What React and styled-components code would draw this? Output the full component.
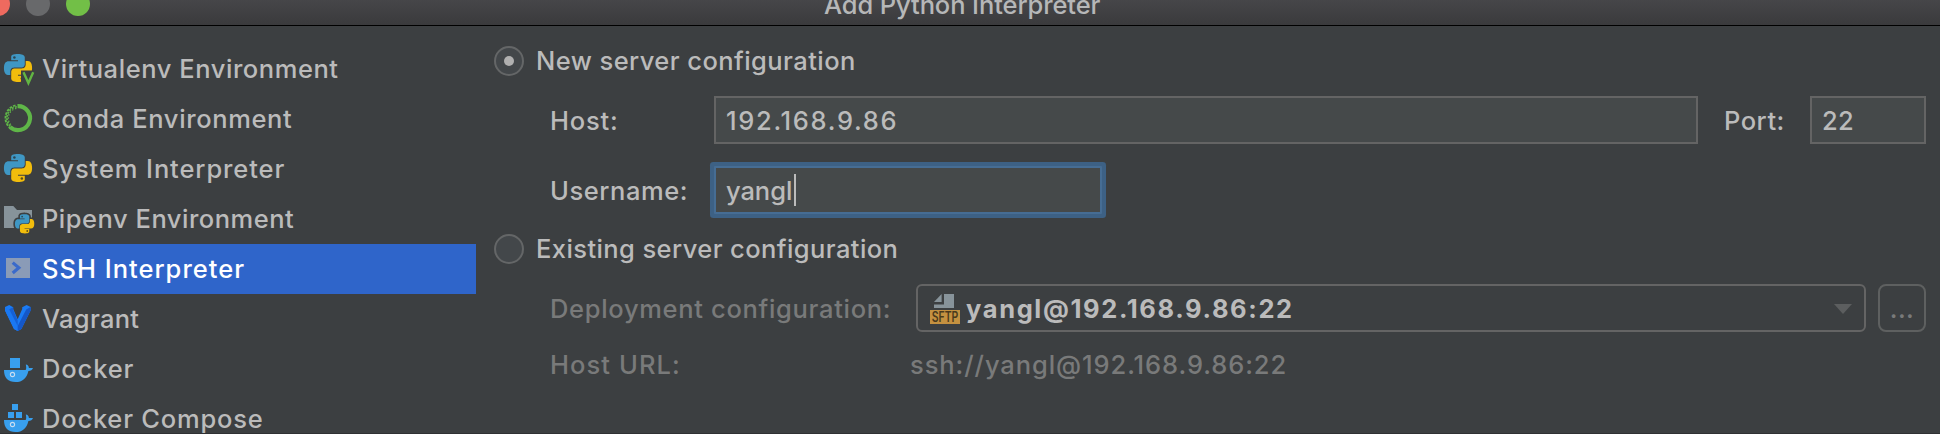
import React from "react";
import styled, { createGlobalStyle } from "styled-components";

const GlobalStyle = createGlobalStyle`
  * { box-sizing: border-box; }
  body { margin: 0; background: #3c3f41; }
`;

const Window = styled.div`
  width: 1940px;
  height: 434px;
  display: flex;
  flex-direction: column;
  overflow: hidden;
  background: #3c3f41;
  border-bottom: 1px solid #2f3133;
  color: #bbbbbb;
  font: 450 25.5px/50px Inter, "Liberation Sans", sans-serif;
  white-space: nowrap;
`;

const TitleBar = styled.header`
  flex: 0 0 26px;
  display: flex;
  align-items: flex-start;
  overflow: hidden;
  background: linear-gradient(#464649, #3a3a3c);
  border-bottom: 1px solid #000;
`;

const Lights = styled.div`
  flex: none;
  display: flex;
  gap: 16px;
  width: 838px;
  margin: -8px 0 0 -14px;
`;

const Light = styled.span`
  width: 24px;
  height: 24px;
  border-radius: 50%;
  background: ${(p) => p.$color};
`;

const Title = styled.h1`
  margin: 0;
  font-size: 25.5px;
  font-weight: 450;
  line-height: 9px;
  letter-spacing: -0.1px;
  color: #b6b7b8;
`;

const Body = styled.div`
  flex: 1;
  min-height: 0;
  display: flex;
`;

const Sidebar = styled.nav`
  flex: 0 0 476px;
  padding-top: 18px;
`;

const SidebarItem = styled.div`
  height: 50px;
  display: flex;
  align-items: flex-start;
  gap: 8px;
  padding-left: 2px;
  background: ${(p) => (p.$selected ? "#2f65ca" : "transparent")};
  color: ${(p) => (p.$selected ? "#ffffff" : "inherit")};

  svg {
    flex: none;
    width: 32px;
    height: 32px;
    margin-top: 8px;
    overflow: visible;
  }
`;

const Text = styled.span`
  letter-spacing: ${(p) => p.$track}px;
`;

const Panel = styled.main`
  flex: 1;
  padding: 20px 14px 0 18px;
`;

const RadioRow = styled.label`
  display: flex;
  align-items: center;
  gap: 12px;
  height: 30px;
  margin-top: ${(p) => p.$top || 0}px;
`;

const Radio = styled.span`
  width: 30px;
  height: 30px;
  display: grid;
  place-items: center;
  border: 2px solid #646667;
  border-radius: 50%;
  background: #43474a;

  &::after {
    content: "";
    width: 10px;
    height: 10px;
    border-radius: 50%;
    background: ${(p) => (p.$checked ? "#b0b0b0" : "transparent")};
  }
`;

const FieldRow = styled.div`
  display: flex;
  height: 48px;
  margin-top: ${(p) => p.$top}px;
  padding-left: 56px;
  color: ${(p) => (p.$disabled ? "#797a7a" : "inherit")};
`;

const Label = styled.span`
  flex: 0 0 ${(p) => p.$width}px;
  letter-spacing: ${(p) => p.$track}px;
  line-height: 50px;
`;

const PortLabel = styled(Label)`
  padding-left: 26px;
`;

const Input = styled.div`
  width: ${(p) => p.$width}px;
  height: 48px;
  display: flex;
  padding-left: 10px;
  border: 2px solid ${(p) => (p.$focused ? "#466d94" : "#646464")};
  box-shadow: ${(p) => (p.$focused ? "0 0 0 4px #3d6185" : "none")};
  border-radius: ${(p) => (p.$focused ? "1px" : "0")};
  background: #45494a;
  line-height: 46px;
`;

const Caret = styled.span`
  width: 2px;
  height: 32px;
  margin: 6px 0 0 2px;
  background: #bbbbbb;
`;

const Combo = styled.div`
  width: 950px;
  display: flex;
  padding-left: 12px;
  border: 2px solid #646464;
  border-radius: 6px;
  color: #bbbbbb;
  font-weight: 700;
  line-height: 46px;
`;

const SftpSlot = styled.span`
  flex: none;
  width: 36px;
  padding-top: 8px;

  svg {
    display: block;
  }
`;

const Arrow = styled.svg`
  flex: none;
  margin: 18px 12px 0 auto;
`;

const MoreButton = styled.div`
  width: 48px;
  margin-left: 12px;
  border: 2px solid #5e6060;
  border-radius: 8px;
  line-height: 46px;
  text-align: center;
  letter-spacing: 0.4px;
`;

const PY_TOP =
  "M14.25.18l.9.2.73.26.59.3.45.32.34.34.25.34.16.33.1.3.04.26.02.2-.01.13V8.5l-.05.63-.13.55-.21.46-.26.38-.3.31-.33.25-.35.19-.35.14-.33.1-.3.07-.26.04-.21.02H8.77l-.69.05-.59.14-.5.22-.41.27-.33.32-.27.35-.2.36-.15.37-.1.35-.07.32-.04.27-.02.21v3.06H3.17l-.21-.03-.28-.07-.32-.12-.35-.18-.36-.26-.36-.36-.35-.46-.32-.59-.28-.73-.21-.88-.14-1.05-.05-1.23.06-1.22.16-1.04.24-.87.32-.71.36-.57.4-.44.42-.33.42-.24.4-.16.36-.1.32-.05.24-.01h.16l.06.01h8.16v-.83H6.18l-.01-2.75-.02-.37.05-.34.11-.31.17-.28.25-.26.31-.23.38-.2.44-.18.51-.15.58-.12.64-.1.71-.06.77-.04.84-.02 1.27.05z";
const PY_BOTTOM =
  "M21.04 6.11l.28.06.32.12.35.18.36.27.36.35.35.47.32.59.28.73.21.88.14 1.04.05 1.23-.06 1.23-.16 1.04-.24.86-.32.71-.36.57-.4.45-.42.33-.42.24-.4.16-.36.09-.32.05-.24.02-.16-.01h-8.22v.82h5.84l.01 2.76.02.36-.05.34-.11.31-.17.29-.25.25-.31.24-.38.2-.44.17-.51.15-.58.13-.64.09-.71.07-.77.04-.84.01-1.27-.04-1.07-.14-.9-.2-.73-.25-.59-.3-.45-.33-.34-.34-.25-.34-.16-.33-.1-.3-.04-.25-.02-.2.01-.13v-5.34l.05-.64.13-.54.21-.46.26-.38.3-.32.33-.24.35-.2.35-.14.33-.1.3-.06.26-.04.21-.02.13-.01h5.84l.69-.05.59-.14.5-.21.41-.28.33-.32.27-.35.2-.36.15-.36.1-.35.07-.32.04-.28.02-.21V6.07h2.09l.14.01z";

function Snake({ transform, outline }) {
  return (
    <g transform={transform}>
      {outline && (
        <g fill="#3c3f41" stroke="#3c3f41" strokeWidth="4" strokeLinejoin="round">
          <path d={PY_TOP} />
          <path d={PY_BOTTOM} />
        </g>
      )}
      <path d={PY_TOP} fill="#3f97c4" />
      <path d={PY_BOTTOM} fill="#f2bd0c" />
      <circle cx="8.9" cy="3" r="1.1" fill="#2c4654" />
      <circle cx="15.3" cy="21" r="1.1" fill="#5c4d18" />
    </g>
  );
}

const PythonIcon = () => (
  <svg viewBox="0 0 32 32">
    <Snake transform="translate(2 2) scale(1.1667)" />
  </svg>
);

const VirtualenvIcon = () => (
  <svg viewBox="0 0 32 32">
    <Snake transform="translate(2 2) scale(1.1667)" />
    <path d="M19 18.5H32V32H19z" fill="#3c3f41" />
    <path d="M21.5 20.2L26.4 31L31.2 20.2" fill="none" stroke="#62b543" strokeWidth="2.4" />
  </svg>
);

const CondaIcon = () => (
  <svg viewBox="0 0 32 32" fill="none" stroke="#5fb648">
    <path d="M15.5 4.1A12 12 0 1 1 8 25" strokeWidth="4.2" />
    <path d="M8.6 26.4A13 13 0 0 1 14.5 3.2" strokeWidth="1.9" strokeDasharray="2.6 1.2" />
    <path d="M8.3 24A11.3 11.3 0 0 1 15 4.7" strokeWidth="1.7" strokeDasharray="1.9 1.4" />
    <path d="M8.8 22.6A9.8 9.8 0 0 1 15 6.3" strokeWidth="1.3" strokeDasharray="1.4 1.8" />
  </svg>
);

const PipenvIcon = () => (
  <svg viewBox="0 0 32 32">
    <path d="M2 4H11.3L15 8H30V26H2z" fill="#87939a" />
    <Snake transform="translate(13 12.2) scale(0.8)" outline />
  </svg>
);

const SshIcon = () => (
  <svg viewBox="0 0 32 32">
    <path d="M4 6H28V26H4z" fill="#8a9bb7" />
    <path d="M10.7 10.6L16.8 15.8L10.7 21" fill="none" stroke="#3a6acb" strokeWidth="3.2" />
  </svg>
);

const VagrantIcon = () => (
  <svg viewBox="0 0 32 32">
    <path d="M3 5L7.2 3L11.2 5.2V7L15.7 17.2L20.2 7V5.2L24.6 3L28.6 5V8.6L19.4 27L15.7 29L12 27L3 8.6z" fill="#1a7bf5" />
    <path d="M3 5L7.2 7.2L15.7 24V29L12 27L3 8.6z" fill="#1a78f2" />
    <path d="M11.2 5.2V8L15.7 18.5V24L7.2 7.2z" fill="#1560d6" />
    <path d="M28.6 5L24.2 7.4L15.7 24V29L19.4 27L28.6 8.6z" fill="#1557c8" />
  </svg>
);

function Whale({ children }) {
  return (
    <svg viewBox="0 0 32 32" fill="#389fee">
      {children}
      <path d="M2 18H23.6C24.6 17 24.2 14.6 23.8 12.6C25.6 12.8 26.8 14.2 26.9 15.9H31C30.4 17.9 28.6 18.6 26.4 18.9C24.6 26.4 20.4 30 13.6 30C6 30 2 26 2 18z" />
      <circle cx="10.5" cy="22.5" r="2.1" fill="none" stroke="#c6dcf0" strokeWidth="1.1" />
    </svg>
  );
}

const DockerIcon = () => (
  <Whale>
    <path d="M8 6h10v10H8z" />
  </Whale>
);

const ComposeIcon = () => (
  <Whale>
    <path d="M10 2h6v6h-6zM6 10h6v6H6zM14 10h6v6h-6z" />
  </Whale>
);

const SftpIcon = () => (
  <svg width="30" height="30" viewBox="0 0 30 30">
    <path d="M11.6 0V8H4z" fill="#87939a" />
    <path d="M14 0H24V14H4V10.4H14z" fill="#87939a" />
    <path d="M0 16H30V30H0z" fill="#c49140" />
    <text x="1.8" y="28" textLength="26.5" lengthAdjust="spacingAndGlyphs" fontFamily="Inter, sans-serif" fontSize="14" fontWeight="600" letterSpacing="0" fill="#4a3a1c">
      SFTP
    </text>
  </svg>
);

const ITEMS = [
  { name: "Virtualenv Environment", track: 0.56, Icon: VirtualenvIcon },
  { name: "Conda Environment", track: 0.63, Icon: CondaIcon },
  { name: "System Interpreter", track: 0.9, Icon: PythonIcon },
  { name: "Pipenv Environment", track: 0.51, Icon: PipenvIcon },
  { name: "SSH Interpreter", track: 1, Icon: SshIcon, selected: true },
  { name: "Vagrant", track: 0.3, Icon: VagrantIcon },
  { name: "Docker", track: 0.88, Icon: DockerIcon },
  { name: "Docker Compose", track: 0.79, Icon: ComposeIcon },
];

export default function App() {
  return (
    <>
      <GlobalStyle />
      <Window>
        <TitleBar>
          <Lights>
            <Light $color="#ee6a5f" />
            <Light $color="#68696b" />
            <Light $color="#72bf47" />
          </Lights>
          <Title>Add Python Interpreter</Title>
        </TitleBar>
        <Body>
          <Sidebar>
            {ITEMS.map(({ name, track, Icon, selected }) => (
              <SidebarItem key={name} $selected={selected}>
                <Icon />
                <Text $track={track}>{name}</Text>
              </SidebarItem>
            ))}
          </Sidebar>
          <Panel>
            <RadioRow>
              <Radio $checked />
              <Text $track={0.43}>New server configuration</Text>
            </RadioRow>
            <FieldRow $top={20}>
              <Label $width={164} $track={0.8}>Host:</Label>
              <Input $width={984}>
                <Text $track={1.68}>192.168.9.86</Text>
              </Input>
              <PortLabel $width={112} $track={0.5}>Port:</PortLabel>
              <Input $width={116}>
                <Text $track={0.2}>22</Text>
              </Input>
            </FieldRow>
            <FieldRow $top={22}>
              <Label $width={164} $track={0.57}>Username:</Label>
              <Input $width={388} $focused>
                <Text $track={-0.06}>yangl</Text>
                <Caret />
              </Input>
            </FieldRow>
            <RadioRow $top={20}>
              <Radio />
              <Text $track={0.41}>Existing server configuration</Text>
            </RadioRow>
            <FieldRow $top={20} $disabled>
              <Label $width={366} $track={0.68}>Deployment configuration:</Label>
              <Combo>
                <SftpSlot>
                  <SftpIcon />
                </SftpSlot>
                <Text $track={1.62}>yangl@192.168.9.86:22</Text>
                <Arrow width="18" height="10" viewBox="0 0 18 10">
                  <path d="M0 0H18L9 10z" fill="#5c5e5f" />
                </Arrow>
              </Combo>
              <MoreButton>...</MoreButton>
            </FieldRow>
            <FieldRow $top={8} $disabled>
              <Label $width={360} $track={1.08}>Host URL:</Label>
              <Label $width={400} $track={0.92}>ssh://yangl@192.168.9.86:22</Label>
            </FieldRow>
          </Panel>
        </Body>
      </Window>
    </>
  );
}
